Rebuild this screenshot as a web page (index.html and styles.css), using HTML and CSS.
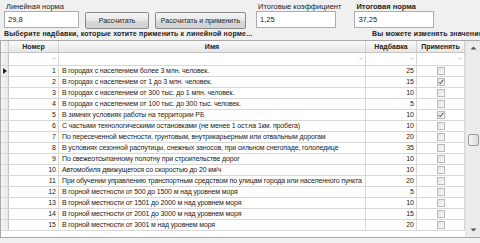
FILE: index.html
```html
<!DOCTYPE html>
<html lang="ru">
<head>
    <meta charset="UTF-8">
    <title>Надбавки</title>
    <link rel="stylesheet" href="styles.css">
</head>
<body>
    <div class="top">
        <div class="field f-norm">
            <label>Линейная норма</label>
            <input type="text" value="29,8">
        </div>
        <button class="btn b-calc">Рассчитать</button>
        <button class="btn b-apply">Рассчитать и применить</button>
        <div class="field f-coef">
            <label>Итоговые коэффициент</label>
            <input type="text" value="1,25">
        </div>
        <div class="field f-total">
            <label class="bold">Итоговая норма</label>
            <input type="text" value="37,25">
        </div>
    </div>

    <div class="hint">
        <span class="bold">Выберите надбавки, которые хотите применить к линейной норме...</span>
        <span class="bold hint-right">Вы можете изменять значения</span>
    </div>

    <div class="grid">
        <div class="table">
            <div class="row head">
                <div class="c rh"></div>
                <div class="c">Номер</div>
                <div class="c">Имя</div>
                <div class="c">Надбавка</div>
                <div class="c">Применять</div>
            </div>
            <div class="row filter">
                <div class="c rh"></div>
                <div class="c"><span class="dd"></span></div>
                <div class="c"><span class="dd"></span></div>
                <div class="c"><span class="dd"></span></div>
                <div class="c"><span class="dd"></span></div>
            </div>
            <div id="rows"></div>
            <div class="row rest">
                <div class="c rh"></div>
                <div class="c"></div>
                <div class="c"></div>
                <div class="c"></div>
                <div class="c"></div>
            </div>
        </div>
        <div class="scroll">
            <div class="sb-btn">
                <svg width="7" height="4" viewBox="0 0 7 4"><path d="M0.5 3.5 L3.5 0.5 L6.5 3.5" fill="#555"/></svg>
            </div>
            <div class="sb-track">
                <div class="thumb"></div>
            </div>
            <div class="sb-btn">
                <svg width="7" height="4" viewBox="0 0 7 4"><path d="M0.5 0.5 L3.5 3.5 L6.5 0.5" fill="#555"/></svg>
            </div>
        </div>
    </div>

    <script>
        const data = [
            ['В городах с населением более 3 млн. человек.', 25, false],
            ['В городах с населением от 1 до 3 млн. человек.', 15, true],
            ['В городах с населением от 300 тыс. до 1 млн. человек.', 10, false],
            ['В городах с населением от 100 тыс. до 300 тыс. человек.', 5, false],
            ['В зимних условиях работы на территории РБ', 10, true],
            ['С частыми технологическими остановками (не менее 1 ост.на 1км. пробега)', 10, false],
            ['По пересеченной местности, грунтовым, внутрикарьерным или отвальным дорогам', 20, false],
            ['В условиях сезонной распутицы, снежных заносов, при сильном снегопаде, гололедице', 35, false],
            ['По свежеотсыпанному полотну при строительстве дорог', 10, false],
            ['Автомобиля движущегося со скоростью до 20 км/ч', 10, false],
            ['При обучении управлению транспортным средством по улицам города или населенного пункта', 20, false],
            ['В горной местности от 500 до 1500 м над уровнем моря', 5, false],
            ['В горной местности от 1501 до 2000 м над уровнем моря', 10, false],
            ['В горной местности от 2001 до 3000 м над уровнем моря', 15, false],
            ['В горной местности от 3001 м над уровнем моря', 20, false]
        ];
        const rows = document.querySelector('#rows');
        const tick = '<svg width="6" height="6" viewBox="0 0 6 6"><path d="M0.8 3.2 L2.3 4.8 L5.2 0.8" fill="none" stroke="#333" stroke-width="1"/></svg>';
        data.forEach((d, i) => {
            const row = document.createElement('div');
            row.className = 'row data';
            const arrow = i === 0 ? '<span class="cur"></span>' : '';
            row.innerHTML = `
                <div class="c rh">${arrow}</div>
                <div class="c num">${i + 1}</div>
                <div class="c name">${d[0]}</div>
                <div class="c num">${d[1]}</div>
                <div class="c chk"><span class="box">${d[2] ? tick : ''}</span></div>`;
            rows.appendChild(row);
        });
    </script>
</body>
</html>
```

FILE: styles.css
```css
*{
    margin: 0;
    padding: 0;
    box-sizing: border-box;
}
body {
    font-family: 'Liberation Sans', Arial, sans-serif;
    font-size: 7px;
    color: #222;
    background-color: #f0f0f0;
    width: 480px;
    height: 243px;
    overflow: hidden;
}
.bold {
    font-weight: bold;
}
.top {
    height: 29px;
    display: flex;
    align-items: flex-start;
    padding-top: 2px;
}
.field {
    display: flex;
    flex-direction: column;
}
.field label {
    font-size: 7.5px;
    line-height: 9px;
    padding-left: 2px;
}
.field input {
    height: 17px;
    border: 1px solid #abadb3;
    background: #fff;
    font-family: inherit;
    font-size: 7.5px;
    color: #222;
    padding: 0 3px;
}
.f-norm {
    margin-left: 4px;
}
.f-norm input {
    width: 75px;
}
.f-coef {
    margin-left: 10px;
}
.f-coef input,
.f-total input {
    width: 80px;
}
.f-total {
    margin-left: 13px;
}
.btn {
    margin-top: 10px;
    height: 17px;
    border: 1px solid #8a8a8a;
    border-radius: 2px;
    background: linear-gradient(#f6f6f6, #e6e6e6 50%, #d8d8d8 51%, #d2d2d2);
    font-family: inherit;
    font-size: 7px;
    color: #222;
}
.b-calc {
    margin-left: 6px;
    width: 64px;
}
.b-apply {
    margin-left: 6px;
    width: 91px;
}
.hint {
    height: 11px;
    line-height: 10px;
    padding-left: 4px;
    display: grid;
    grid-template-columns: 368px 1fr;
    white-space: nowrap;
    overflow: hidden;
    letter-spacing: 0.15px;
}
.hint-right {
    overflow: hidden;
}
.grid {
    height: 198px;
    display: flex;
    border: 1px solid #a8a8a8;
    border-right: none;
    background: #fff;
}
.table {
    flex: 1;
    display: flex;
    flex-direction: column;
}
.row {
    display: grid;
    grid-template-columns: 8px 50px 307px 51px 48px;
    border-bottom: 1px solid #d8d8d8;
}
.c {
    border-right: 1px solid #d8d8d8;
    white-space: nowrap;
    overflow: hidden;
    position: relative;
}
.rh {
    background: linear-gradient(90deg, #f6f6f6, #e8e8e8);
    border-right-color: #c4c4c4;
}
.head {
    height: 12px;
    background: linear-gradient(#fbfbfb, #f0f0f0 50%, #e6e6e6);
    border-bottom-color: #c4c4c4;
}
.head .c {
    font-weight: bold;
    text-align: center;
    line-height: 11px;
    border-right-color: #d0d0d0;
}
.filter {
    height: 13px;
}
.dd {
    position: absolute;
    right: 2px;
    top: 3px;
    width: 4px;
    height: 4px;
    border-right: 1px solid #b8b8b8;
    border-bottom: 1px solid #b8b8b8;
    transform: scale(0.7, 0.5) rotate(45deg);
}
.data {
    height: 11px;
    line-height: 10px;
}
.num {
    text-align: right;
    padding-right: 2px;
}
.name {
    padding-left: 3px;
    letter-spacing: -0.13px;
}
.chk {
    display: flex;
    justify-content: center;
    align-items: center;
}
.box {
    width: 8px;
    height: 8px;
    border: 1px solid #b9b9b9;
    background: linear-gradient(135deg, #e4e4e4, #fafafa);
    display: flex;
    align-items: center;
    justify-content: center;
}
.cur {
    position: absolute;
    left: 2px;
    top: 2px;
    border-left: 4px solid #222;
    border-top: 3px solid transparent;
    border-bottom: 3px solid transparent;
}
.rest {
    flex: 1;
    border-bottom: none;
}
.rest .c {
    border-right: none;
}
.rest .rh {
    background: #fff;
}
.scroll {
    width: 15px;
    display: flex;
    flex-direction: column;
    background: #ececec;
    border-left: 1px solid #e0e0e0;
}
.sb-btn {
    height: 14px;
    display: flex;
    align-items: center;
    justify-content: center;
}
.sb-track {
    flex: 1;
    display: flex;
    flex-direction: column;
    align-items: center;
    padding-top: 79px;
}
.thumb {
    width: 11px;
    height: 12px;
    border: 1px solid #9a9a9a;
    border-radius: 2px;
    background: linear-gradient(90deg, #f4f4f4, #dcdcdc);
}
```
